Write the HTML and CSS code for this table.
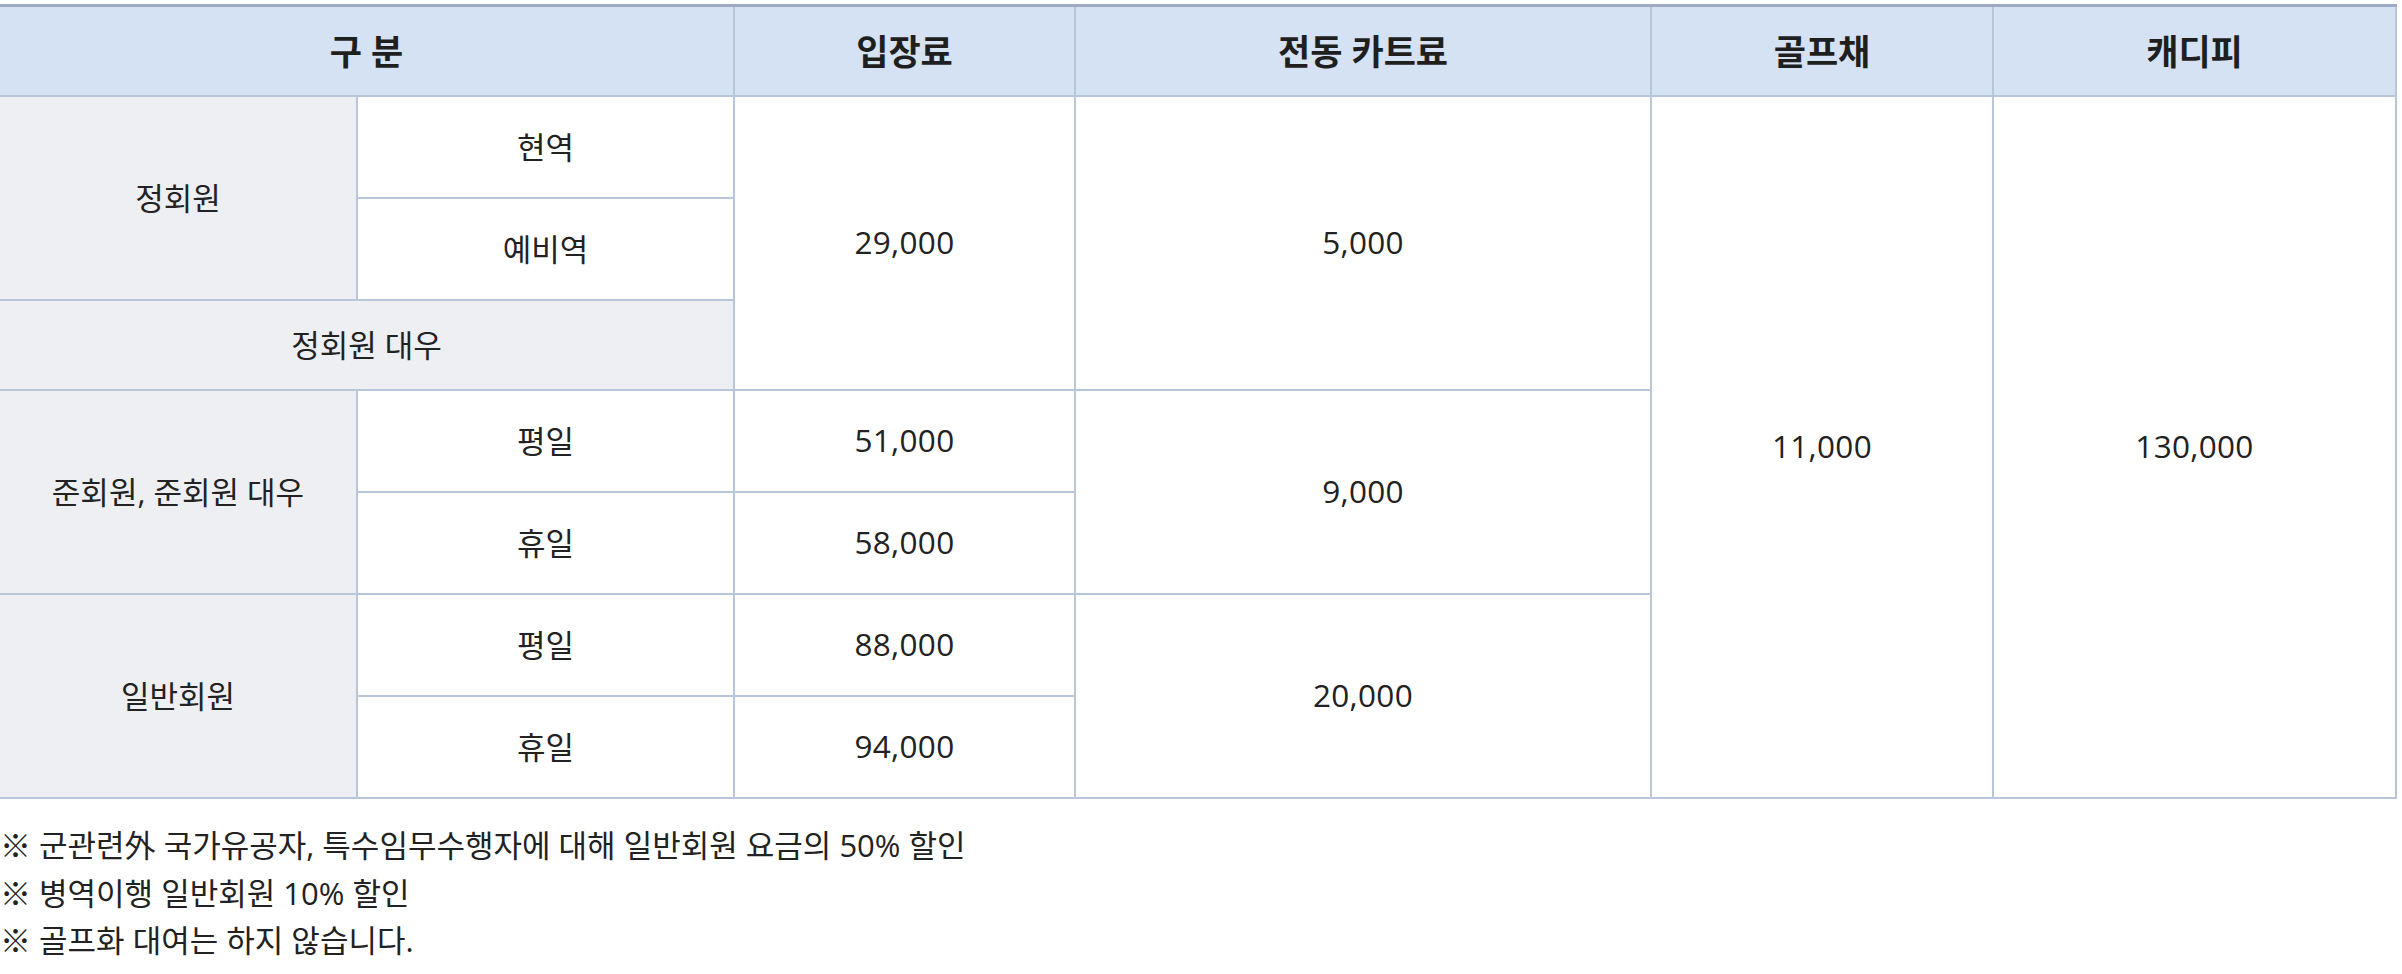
FILE: index.html
```html
<!DOCTYPE html>
<html lang="ko">
<head>
<meta charset="utf-8">
<title>이용요금</title>
<link rel="stylesheet" href="styles.css">
</head>
<body>
<div class="page">
  <table class="fee">
    <colgroup>
      <col class="c1"><col class="c2"><col class="c3"><col class="c4"><col class="c5"><col class="c6">
    </colgroup>
    <thead>
      <tr class="h-row">
        <th colspan="2">구 분</th>
        <th>입장료</th>
        <th>전동 카트료</th>
        <th>골프채</th>
        <th>캐디피</th>
      </tr>
    </thead>
    <tbody>
      <tr class="r-tall">
        <td rowspan="2" class="cat">정회원</td>
        <td>현역</td>
        <td rowspan="3" class="num">29,000</td>
        <td rowspan="3" class="num">5,000</td>
        <td rowspan="7" class="num">11,000</td>
        <td rowspan="7" class="num">130,000</td>
      </tr>
      <tr class="r-tall">
        <td>예비역</td>
      </tr>
      <tr class="r-short">
        <td colspan="2" class="cat">정회원 대우</td>
      </tr>
      <tr class="r-tall">
        <td rowspan="2" class="cat">준회원, 준회원 대우</td>
        <td>평일</td>
        <td class="num">51,000</td>
        <td rowspan="2" class="num">9,000</td>
      </tr>
      <tr class="r-tall">
        <td>휴일</td>
        <td class="num">58,000</td>
      </tr>
      <tr class="r-tall">
        <td rowspan="2" class="cat">일반회원</td>
        <td>평일</td>
        <td class="num">88,000</td>
        <td rowspan="2" class="num">20,000</td>
      </tr>
      <tr class="r-tall">
        <td>휴일</td>
        <td class="num">94,000</td>
      </tr>
    </tbody>
  </table>
  <ul class="notes">
    <li>※ 군관련外 국가유공자, 특수임무수행자에 대해 일반회원 요금의 50% 할인</li>
    <li>※ 병역이행 일반회원 10% 할인</li>
    <li>※ 골프화 대여는 하지 않습니다.</li>
  </ul>
</div>
</body>
</html>
```

FILE: styles.css
```css
html, body {
  margin: 0;
  padding: 0;
  background: #ffffff;
}

body {
  font-family: "Open Sans", "Noto Sans CJK KR", sans-serif;
  color: #222222;
}

.page {
  padding-top: 4px;
}

.fee {
  width: 2397px;
  table-layout: fixed;
  border-collapse: separate;
  border-spacing: 0;
  border-top: 3px solid #9eabc0;
}

.c1 { width: 358px; }
.c2 { width: 377px; }
.c3 { width: 341px; }
.c4 { width: 576px; }
.c5 { width: 342px; }
.c6 { width: 403px; }

.fee th,
.fee td {
  padding: 0 0 3px 0;
  text-align: center;
  vertical-align: middle;
  border-right: 2px solid #b8c6da;
  border-bottom: 2px solid #b8c6da;
}

.fee th {
  background: #d5e2f3;
  font-size: 35px;
  font-weight: 700;
  color: #1f1f1f;
}

.fee td {
  font-size: 31px;
  font-weight: 400;
  color: #222222;
  background: #ffffff;
}

.fee td.num {
  font-size: 31.5px;
  letter-spacing: 0.3px;
}

.fee td.cat {
  background: #edeff3;
}

.h-row { height: 90px; }
.r-tall { height: 102px; }
.r-short { height: 90px; }

.notes {
  list-style: none;
  margin: 23px 0 0 0;
  padding: 0;
  font-size: 31px;
  line-height: 47.5px;
  color: #222222;
}
```
